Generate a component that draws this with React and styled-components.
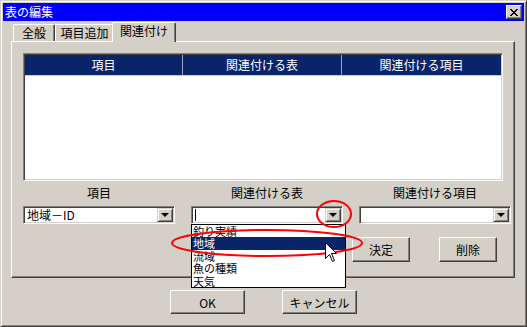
import React from 'react'
import styled, { createGlobalStyle } from 'styled-components'

const GlobalStyle = createGlobalStyle`
  html, body {
    margin: 0;
    padding: 0;
    background: #d4d0c8;
  }
  body {
    font-family: "Noto Sans CJK JP", "DejaVu Sans", sans-serif;
    font-size: 12px;
    color: #000;
  }
`;

const Window = styled.div`
  position: relative;
  box-sizing: border-box;
  width: 527px;
  height: 327px;
  padding: 2px;
  background: #d4d0c8;
  border: 1px solid;
  border-color: #d4d0c8 #404040 #404040 #d4d0c8;
  box-shadow: inset 1px 1px #fff, inset -1px -1px #808080;
  display: flex;
  flex-direction: column;
`;

const TitleBar = styled.div`
  height: 18px;
  background: #0000ff;
  color: #fff;
  display: flex;
  align-items: center;
  justify-content: space-between;
  padding: 0 2px 0 2px;
  line-height: 18px;
`;

const CloseButton = styled.div`
  box-sizing: border-box;
  width: 16px;
  height: 14px;
  background: #d4d0c8;
  border: 1px solid;
  border-color: #fff #404040 #404040 #fff;
  box-shadow: inset -1px -1px #808080;
  display: flex;
  align-items: center;
  justify-content: center;
`;

const Body = styled.div`
  padding: 1px 0 0 8px;
  display: flex;
  flex-direction: column;
`;

const Tabs = styled.div`
  display: flex;
  align-items: flex-end;
  height: 19px;
  padding-left: 2px;
`;

const Tab = styled.div`
  position: relative;
  box-sizing: border-box;
  width: ${({ $w }) => $w}px;
  height: ${({ $active }) => ($active ? 20 : 17)}px;
  margin: 0 0 ${({ $active }) => ($active ? -1 : 0)}px ${({ $active }) => ($active ? -2 : 0)}px;
  z-index: ${({ $active }) => ($active ? 1 : 0)};
  background: #d4d0c8;
  border-top: 1px solid #fff;
  border-left: 1px solid #fff;
  border-right: 1px solid #404040;
  border-radius: 2px 2px 0 0;
  box-shadow: inset -1px 0 #808080;
  text-align: center;
  line-height: 16px;
`;

const Pane = styled.div`
  box-sizing: border-box;
  width: 504px;
  height: 237px;
  padding: 11px 0 0 11px;
  border: 1px solid;
  border-color: #fff #404040 #404040 #fff;
  box-shadow: inset -1px -1px #808080;
  display: flex;
  flex-direction: column;
`;

const ListView = styled.div`
  box-sizing: border-box;
  width: 480px;
  height: 128px;
  background: #fff;
  border: 1px solid;
  border-color: #808080 #fff #fff #808080;
  box-shadow: inset 1px 1px #404040, inset -1px -1px #d4d0c8;
  padding: 1px;
`;

const HeaderRow = styled.div`
  display: grid;
  grid-template-columns: 158px 159px 1fr;
  height: 20px;
  background: #0a246a;
  border-bottom: 1px solid #c8ccd8;
`;

const HeaderCell = styled.div`
  color: #fff;
  text-align: center;
  line-height: 20px;
  border-right: ${({ $last }) => ($last ? 'none' : '1px solid #9aa3bd')};
`;

const Fields = styled.div`
  display: grid;
  grid-template-columns: 152px 152px 152px;
  column-gap: 16px;
  margin-top: 4px;
`;

const Field = styled.div`
  position: relative;
  display: flex;
  flex-direction: column;
  gap: 5px;
`;

const Label = styled.div`
  text-align: center;
  line-height: 16px;
  height: 16px;
`;

const Combo = styled.div`
  box-sizing: border-box;
  height: 18px;
  background: #fff;
  border: 1px solid;
  border-color: #808080 #fff #fff #808080;
  box-shadow: inset 1px 1px #404040, inset -1px -1px #d4d0c8;
  padding: 1px;
  display: flex;
  align-items: center;
`;

const ComboText = styled.div`
  flex: 1;
  padding-left: 2px;
  line-height: 14px;
  white-space: nowrap;
  display: flex;
  align-items: center;
`;

const Caret = styled.span`
  display: block;
  width: 1px;
  height: 12px;
  background: #000;
`;

const DropButton = styled.div`
  box-sizing: border-box;
  width: 16px;
  height: 14px;
  background: #d4d0c8;
  border: 1px solid;
  border-color: #d4d0c8 #404040 #404040 #d4d0c8;
  box-shadow: inset 1px 1px #fff, inset -1px -1px #808080;
  display: flex;
  align-items: center;
  justify-content: center;
`;

const Arrow = styled.span`
  width: 0;
  height: 0;
  border-left: 4px solid transparent;
  border-right: 4px solid transparent;
  border-top: 4px solid #000;
  margin-left: -1px;
`;

const DropList = styled.div`
  position: absolute;
  left: 0;
  top: 39px;
  width: 155px;
  box-sizing: border-box;
  background: #fff;
  border: 1px solid #000;
  z-index: 2;
`;

const DropItem = styled.div`
  height: 12.4px;
  line-height: 12.4px;
  font-size: 11px;
  padding-left: 1px;
  white-space: nowrap;
  background: ${({ $selected }) => ($selected ? '#0a246a' : '#fff')};
  color: ${({ $selected }) => ($selected ? '#fff' : '#000')};
`;

const Actions = styled.div`
  display: flex;
  justify-content: flex-end;
  gap: 29px;
  margin-top: 13px;
  padding-right: 17px;
`;

const Button = styled.div`
  box-sizing: border-box;
  width: ${({ $w }) => $w}px;
  height: ${({ $h }) => $h}px;
  background: #d4d0c8;
  border: 1px solid;
  border-color: #fff #404040 #404040 #fff;
  box-shadow: inset -1px -1px #808080;
  display: flex;
  align-items: center;
  justify-content: center;
`;

const Footer = styled.div`
  display: flex;
  justify-content: center;
  gap: 37px;
  margin-top: 12px;
  padding-right: 8px;
`;

const Overlay = styled.svg`
  position: absolute;
  left: -1px;
  top: -1px;
  width: 527px;
  height: 327px;
  pointer-events: none;
  z-index: 3;
`;

const items = ['釣り実績', '地域', '流域', '魚の種類', '天気'];

const App = () => {
  return (
    <>
      <GlobalStyle />
      <Window>
        <TitleBar>
          <span>表の編集</span>
          <CloseButton>
            <svg width="8" height="7" viewBox="0 0 8 7" shapeRendering="crispEdges">
              <path d="M0 0h2v1h-2zM6 0h2v1h-2zM1 1h2v1h-2zM5 1h2v1h-2zM2 2h4v1h-4zM3 3h2v1h-2zM2 4h4v1h-4zM1 5h2v1h-2zM5 5h2v1h-2zM0 6h2v1h-2zM6 6h2v1h-2z" fill="#000" />
            </svg>
          </CloseButton>
        </TitleBar>
        <Body>
          <Tabs>
            <Tab $w={42}>全般</Tab>
            <Tab $w={59}>項目追加</Tab>
            <Tab $w={64} $active>関連付け</Tab>
          </Tabs>
          <Pane>
            <ListView>
              <HeaderRow>
                <HeaderCell>項目</HeaderCell>
                <HeaderCell>関連付ける表</HeaderCell>
                <HeaderCell $last>関連付ける項目</HeaderCell>
              </HeaderRow>
            </ListView>
            <Fields>
              <Field>
                <Label>項目</Label>
                <Combo>
                  <ComboText>地域－ID</ComboText>
                  <DropButton><Arrow /></DropButton>
                </Combo>
              </Field>
              <Field>
                <Label>関連付ける表</Label>
                <Combo>
                  <ComboText><Caret /></ComboText>
                  <DropButton><Arrow /></DropButton>
                </Combo>
                <DropList>
                  {items.map((it) => (
                    <DropItem key={it} $selected={it === '地域'}>{it}</DropItem>
                  ))}
                </DropList>
              </Field>
              <Field>
                <Label>関連付ける項目</Label>
                <Combo>
                  <ComboText />
                  <DropButton><Arrow /></DropButton>
                </Combo>
              </Field>
            </Fields>
            <Actions>
              <Button $w={58} $h={25}>決定</Button>
              <Button $w={58} $h={25}>削除</Button>
            </Actions>
          </Pane>
          <Footer>
            <Button $w={75} $h={24}>OK</Button>
            <Button $w={75} $h={24}>キャンセル</Button>
          </Footer>
        </Body>
        <Overlay viewBox="0 0 527 327">
          <ellipse cx="334" cy="214" rx="17" ry="13" fill="none" stroke="#ff0000" strokeWidth="2" />
          <ellipse cx="267" cy="243" rx="95" ry="13" fill="none" stroke="#ff0000" strokeWidth="2" />
          <path
            transform="translate(325 242)"
            d="M0.5 0.5 L0.5 16.5 L4.5 12.5 L7.5 19.5 L9.5 18.5 L6.5 11.5 L11.5 11.5 Z"
            fill="#fff"
            stroke="#000"
            strokeWidth="1"
          />
        </Overlay>
      </Window>
    </>
  )
}

export default App
